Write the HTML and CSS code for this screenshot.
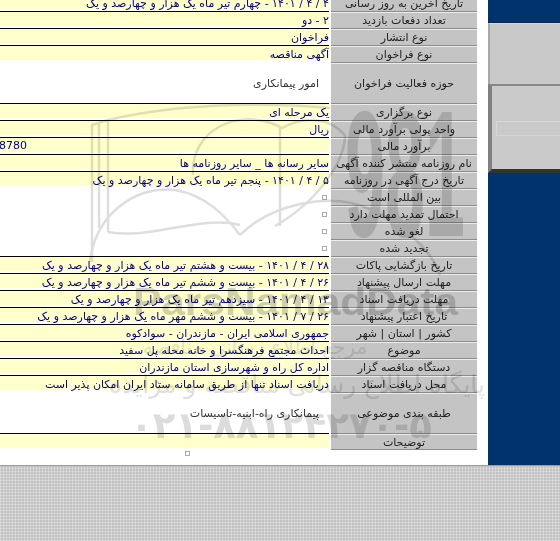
FILE: index.html
```html
<!DOCTYPE html>
<html lang="fa" dir="rtl">
<head>
<meta charset="utf-8">
<title>جزئیات مناقصه</title>
<link rel="stylesheet" href="styles.css">
</head>
<body>
<div class="page">
  <aside class="side">
    <div class="side-head"></div>
    <div class="side-top"></div>
    <div class="side-box"><div class="side-field"></div></div>
    <div class="side-foot"></div>
  </aside>
  <main class="main">
    <div class="rows">
      <div class="row"><div class="label">تاریخ آخرین به روز رسانی</div><div class="val line"><div class="fill">۴ / ۴ / ۱۴۰۱ - چهارم تیر ماه یک هزار و چهارصد و یک</div></div></div>
      <div class="row"><div class="label">تعداد دفعات بازدید</div><div class="val line"><div class="fill">۲ - دو</div></div></div>
      <div class="row"><div class="label">نوع انتشار</div><div class="val line"><div class="fill">فراخوان</div></div></div>
      <div class="row"><div class="label">نوع فراخوان</div><div class="val"><div class="fill">آگهی مناقصه</div></div></div>
      <div class="row tall"><div class="label">حوزه فعالیت فراخوان</div><div class="val line plain">امور پیمانکاری</div></div>
      <div class="row"><div class="label">نوع برگزاری</div><div class="val line"><div class="fill">یک مرحله ای</div></div></div>
      <div class="row"><div class="label">واحد پولی برآورد مالی</div><div class="val line"><div class="fill">ریال</div></div></div>
      <div class="row"><div class="label">برآورد مالی</div><div class="val line"><div class="fill"><span class="amount">8780</span></div></div></div>
      <div class="row"><div class="label">نام روزنامه منتشر کننده آگهی</div><div class="val line"><div class="fill">سایر رسانه ها _ سایر روزنامه ها</div></div></div>
      <div class="row"><div class="label">تاریخ درج آگهی در روزنامه</div><div class="val"><div class="fill">۵ / ۴ / ۱۴۰۱ - پنجم تیر ماه یک هزار و چهارصد و یک</div></div></div>
      <div class="row"><div class="label">بین المللی است</div><div class="val"><span class="box"></span></div></div>
      <div class="row"><div class="label">احتمال تمدید مهلت دارد</div><div class="val"><span class="box"></span></div></div>
      <div class="row"><div class="label">لغو شده</div><div class="val"><span class="box"></span></div></div>
      <div class="row"><div class="label">تجدید شده</div><div class="val line"><span class="box"></span></div></div>
      <div class="row"><div class="label">تاریخ بازگشایی پاکات</div><div class="val line"><div class="fill">۲۸ / ۴ / ۱۴۰۱ - بیست و هشتم تیر ماه یک هزار و چهارصد و یک</div></div></div>
      <div class="row"><div class="label">مهلت ارسال پیشنهاد</div><div class="val line"><div class="fill">۲۶ / ۴ / ۱۴۰۱ - بیست و ششم تیر ماه یک هزار و چهارصد و یک</div></div></div>
      <div class="row"><div class="label">مهلت دریافت اسناد</div><div class="val line"><div class="fill">۱۳ / ۴ / ۱۴۰۱ - سیزدهم تیر ماه یک هزار و چهارصد و یک</div></div></div>
      <div class="row"><div class="label">تاریخ اعتبار پیشنهاد</div><div class="val line"><div class="fill">۲۶ / ۷ / ۱۴۰۱ - بیست و ششم مهر ماه یک هزار و چهارصد و یک</div></div></div>
      <div class="row"><div class="label">کشور | استان | شهر</div><div class="val line"><div class="fill">جمهوری اسلامی ایران - مازندران - سوادکوه</div></div></div>
      <div class="row"><div class="label">موضوع</div><div class="val line"><div class="fill">احداث مجتمع فرهنگسرا و خانه محله پل سفید</div></div></div>
      <div class="row"><div class="label">دستگاه مناقصه گزار</div><div class="val line"><div class="fill">اداره کل راه و شهرسازی استان مازندران</div></div></div>
      <div class="row"><div class="label">محل دریافت اسناد</div><div class="val"><div class="fill">دریافت اسناد تنها از طریق سامانه ستاد ایران امکان پذیر است</div></div></div>
      <div class="row tall"><div class="label">طبقه بندی موضوعی</div><div class="val line plain">پیمانکاری راه-ابنیه-تاسیسات</div></div>
      <div class="row last"><div class="label">توضیحات</div><div class="val"><div class="fill"></div></div></div>
    </div>
    <div class="foot"><span class="box"></span></div>
  </main>
</div>
<svg class="mark" width="560" height="541" viewBox="0 0 560 541" aria-hidden="true">
  <g class="mark-lines">
    <path d="M92 262V125L108 120C160 108 230 100 330 108"/>
    <path d="M99 122V228M108 120V232"/>
    <path d="M108 232C150 240 200 215 240 225"/>
    <path d="M193 175C190 130 240 105 282 128C305 115 330 118 345 135"/>
    <path d="M280 128V226"/>
    <path d="M90 262C95 215 135 185 175 190C205 195 225 215 240 235"/>
    <path d="M240 235C270 205 330 190 372 210C400 222 432 250 440 275"/>
    <path d="M345 135C345 160 320 200 275 226"/>
  </g>
  <text class="mark-digits" x="345" y="236" textLength="120" lengthAdjust="spacingAndGlyphs" direction="ltr">981</text>
  <text class="mark-brand" x="133" y="315" textLength="325" lengthAdjust="spacingAndGlyphs" direction="ltr">ParsNamadData</text>
  <text class="mark-tag" x="255" y="354" text-anchor="middle">مرجع اطلاع رسانی مناقصه</text>
  <text class="mark-sub" x="297" y="393" text-anchor="middle">پایگاه اطلاع رسانی مناقصه و مزایده</text>
  <text class="mark-phone" x="281" y="438" text-anchor="middle" direction="ltr">۰۲۱-۸۸۱۲۴۲۷۰-۵</text>
</svg>
</body>
</html>
```
FILE: styles.css
```css
html, body {
  margin: 0;
  padding: 0;
  height: 541px;
  overflow: hidden;
}
body {
  position: relative;
  font-family: "DejaVu Sans", sans-serif;
  font-size: 11px;
  background-color: #d0d0d0;
  background-image:
    repeating-linear-gradient(90deg, rgba(255,255,255,.2) 0 1px, rgba(0,0,0,.03) 1px 3px),
    repeating-linear-gradient(0deg, rgba(255,255,255,.16) 0 1px, rgba(0,0,0,.04) 1px 3px);
}
.page {
  display: flex;
  height: 465px;
  border-bottom: 1px solid #9a9a9a;
}
.side {
  width: 72px;
  flex: none;
  display: flex;
  flex-direction: column;
  background: #00336b;
}
.side-head {
  height: 22px;
  border-bottom: 1px solid #0a2a50;
}
.side-top {
  height: 60px;
  background: #c9c9c9;
  border-left: 2px solid #a8a8a8;
  border-top: 1px solid #d8d8d8;
}
.side-box {
  height: 83px;
  background: #cacaca;
  border-top: 2px solid #888;
  border-left: 4px solid #808080;
  border-bottom: 4px solid #333;
  display: flex;
  align-items: center;
  padding-left: 4px;
}
.side-field {
  flex: 1;
  height: 13px;
  margin-top: 2px;
  border: 1px solid #d6d6d6;
  border-right: 0;
}
.side-foot {
  flex: 1;
}
.main {
  flex: 1;
  background: #fff;
  overflow: hidden;
}
.rows {
  margin-top: -5px;
  padding-right: 11px;
}
.row {
  display: flex;
  height: 17px;
  gap: 2px;
}
.row.tall {
  height: 41px;
}
.row.last {
  height: 16px;
}
.label {
  width: 146px;
  flex: none;
  box-sizing: border-box;
  display: flex;
  align-items: center;
  justify-content: center;
  background: #c4c4c4;
  border-top: 1px solid #ececec;
  border-bottom: 1px solid #8c8c8c;
  color: #222;
  white-space: nowrap;
}
.val {
  flex: 1;
  box-sizing: border-box;
  color: #000080;
  white-space: nowrap;
  min-width: 0;
  overflow: hidden;
}
.val.line {
  border-bottom: 1px solid #000;
}
.fill {
  height: 14px;
  line-height: 17px;
  background: #ffffcc;
}
.plain {
  display: flex;
  align-items: center;
  padding-right: 10px;
  color: #333;
}
.amount {
  display: block;
  direction: ltr;
  text-align: left;
  margin-left: -1px;
  line-height: 15px;
}
.box {
  display: block;
  width: 3px;
  height: 3px;
  border: 1px solid #aaa;
  margin: 6px 2px 0 0;
}
.foot {
  width: 374px;
  margin: 1px auto 0 0;
}
.foot .box {
  margin: 0 auto;
}
.mark {
  position: absolute;
  left: 0;
  top: 0;
  pointer-events: none;
  mix-blend-mode: multiply;
}
.mark-lines path {
  fill: none;
  stroke: #dedede;
  stroke-width: 2.5;
}
.mark-digits {
  font-family: "Liberation Sans", sans-serif;
  font-weight: 700;
  font-size: 180px;
  fill: #dbdbdb;
}
.mark-brand {
  font-family: "Liberation Sans", sans-serif;
  font-weight: 700;
  font-size: 38px;
  fill: #d0d0d0;
}
.mark-tag {
  font-family: "DejaVu Sans", sans-serif;
  font-size: 20px;
  fill: #e2e2e2;
}
.mark-sub {
  font-family: "DejaVu Sans", sans-serif;
  font-size: 25px;
  fill: #e0e0e0;
}
.mark-phone {
  font-family: "DejaVu Sans", sans-serif;
  font-weight: 700;
  font-size: 37px;
  fill: #dcdcdc;
}
```
